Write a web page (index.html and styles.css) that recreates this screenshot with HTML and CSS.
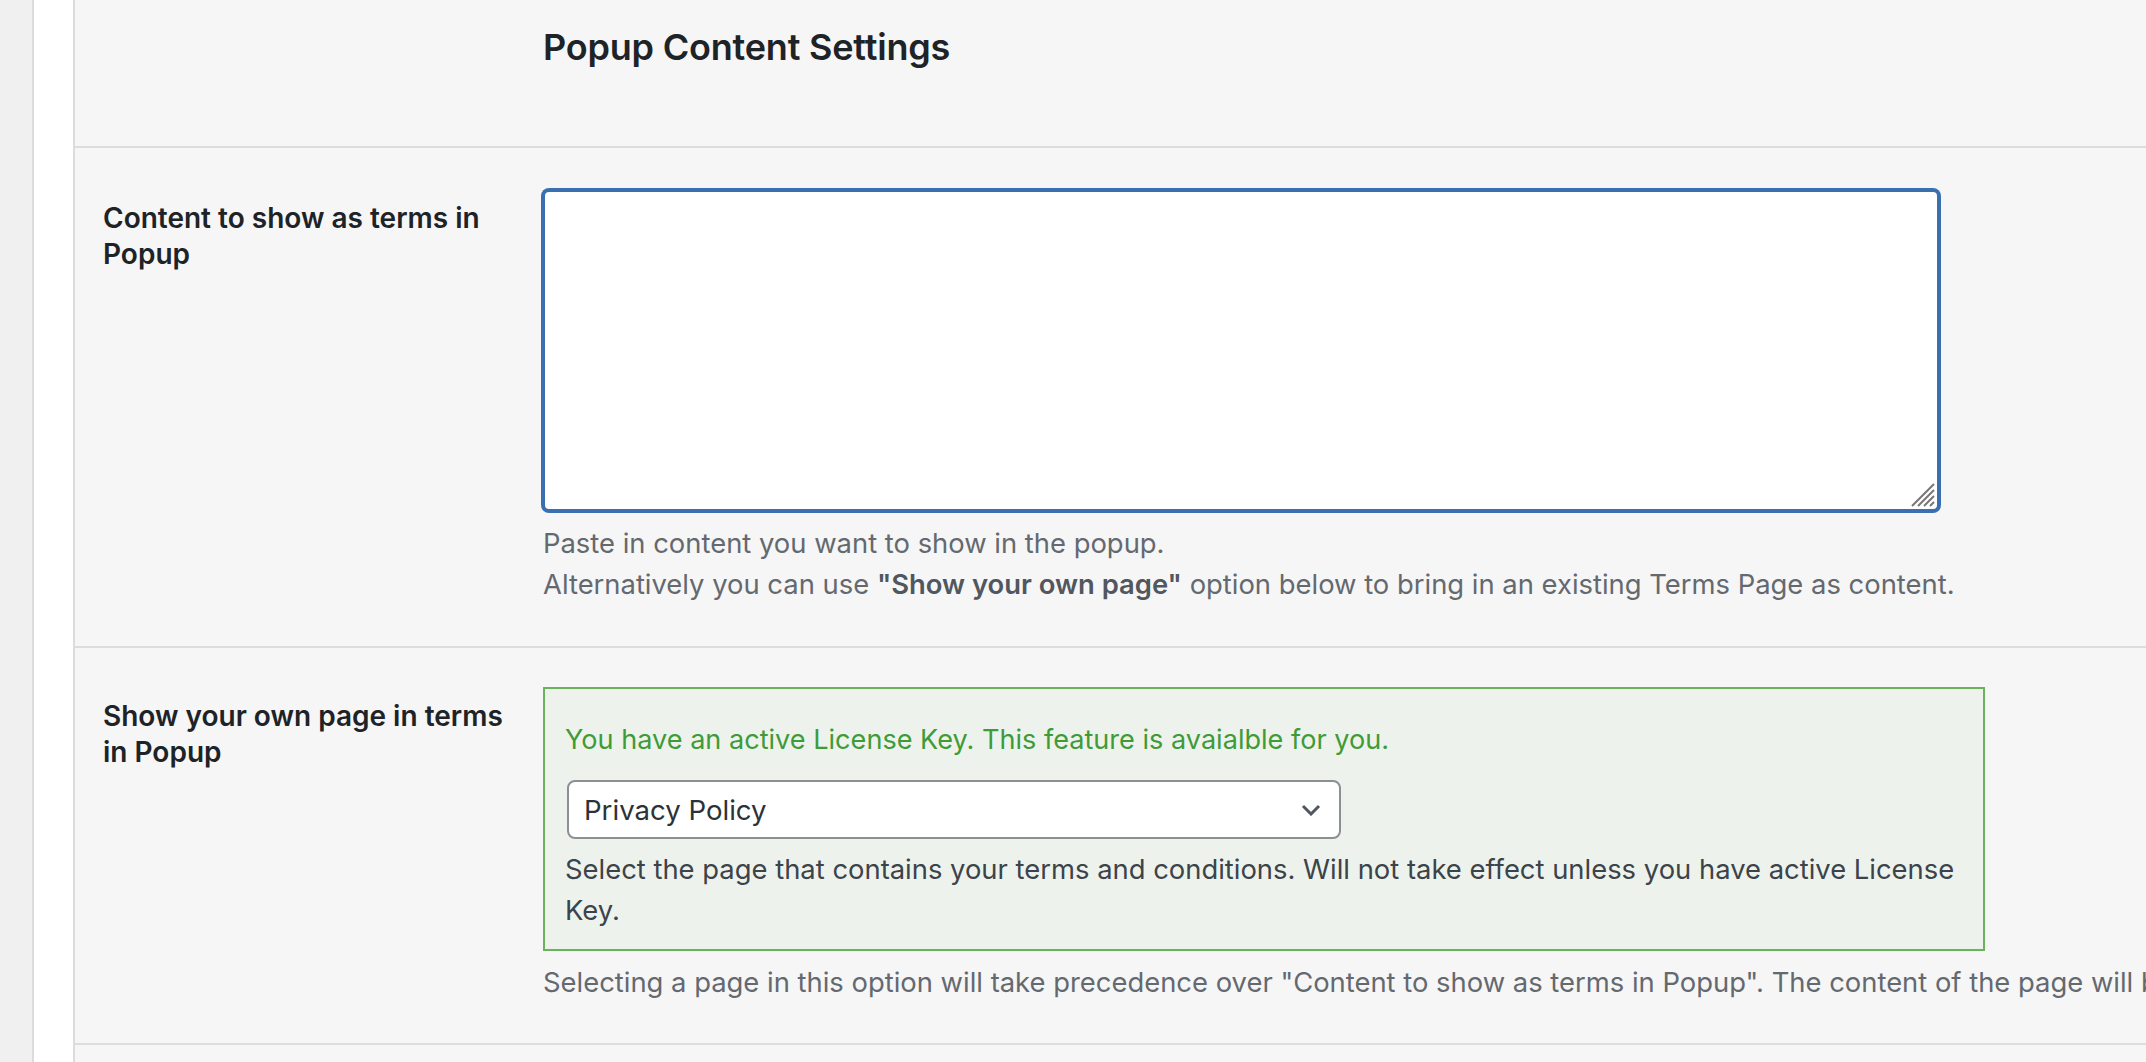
FILE: index.html
```html
<!DOCTYPE html>
<html lang="en">
<head>
<meta charset="utf-8">
<title>Popup Content Settings</title>
<link rel="stylesheet" href="styles.css">
</head>
<body>
<div class="shell">
  <div class="rail"></div>
  <div class="strip"></div>
  <main class="content">
    <section class="row row-head">
      <div class="th"></div>
      <div class="td"><h2 class="title">Popup Content Settings</h2></div>
    </section>
    <section class="row row-terms">
      <div class="th"><label class="label" for="terms">Content to show as terms in Popup</label></div>
      <div class="td">
        <div class="area-wrap">
          <textarea id="terms" class="area"></textarea>
          <svg class="grip" width="26" height="26" viewBox="0 0 26 26" aria-hidden="true">
            <path d="M2 24 L24 2 M8 24 L24 8 M14 24 L24 14 M20 24 L24 20" stroke="#777" stroke-width="2" fill="none"/>
          </svg>
        </div>
        <p class="desc">Paste in content you want to show in the popup.<br>Alternatively you can use <strong>"Show your own page"</strong> option below to bring in an existing Terms Page as content.</p>
      </div>
    </section>
    <section class="row row-page">
      <div class="th"><label class="label">Show your own page in terms in Popup</label></div>
      <div class="td">
        <div class="notice">
          <p class="notice-ok">You have an active License Key. This feature is avaialble for you.</p>
          <div class="select">
            <span class="select-value">Privacy Policy</span>
            <svg class="chev" width="20" height="12" viewBox="0 0 20 12" aria-hidden="true">
              <path d="M2 2 L10 10 L18 2" stroke="#50575e" stroke-width="3" fill="none"/>
            </svg>
          </div>
          <p class="notice-desc">Select the page that contains your terms and conditions. Will not take effect unless you have active License Key.</p>
        </div>
        <p class="desc nowrap">Selecting a page in this option will take precedence over "Content to show as terms in Popup". The content of the page will be used instead of the content entered above.</p>
      </div>
    </section>
    <section class="row row-tail"></section>
  </main>
</div>
</body>
</html>
```

FILE: styles.css
```css
html, body {
  margin: 0;
  padding: 0;
  height: 100%;
  overflow: hidden;
}
body {
  font-family: Inter, "Noto Sans", "Liberation Sans", sans-serif;
  background: #f6f6f6;
  color: #1d2327;
}
.shell {
  display: flex;
  height: 1062px;
}
.rail {
  width: 32px;
  flex: none;
  background: #f0f0f0;
  border-right: 2px solid #dcdcde;
}
.strip {
  width: 39px;
  flex: none;
  background: #ffffff;
  border-right: 2px solid #dcdcde;
}
.content {
  flex: 1;
  min-width: 0;
  background: #f6f6f6;
}
.row {
  display: flex;
  border-bottom: 2px solid #dddddd;
}
.th {
  width: 400px;
  flex: none;
  padding: 0 40px 0 28px;
}
.td {
  flex: 1;
  min-width: 0;
}
.row-head {
  height: 146px;
}
.row-head .td {
  padding-top: 25px;
}
.title {
  margin: 0;
  font-size: 36px;
  line-height: 44px;
  font-weight: 600;
  color: #1d2327;
  letter-spacing: -0.2px;
}
.label {
  display: block;
  font-size: 28px;
  line-height: 36px;
  font-weight: 600;
  color: #1d2327;
}
.row-terms .th {
  padding-top: 52px;
}
.row-terms .td {
  padding-top: 42px;
  padding-bottom: 41px;
}
.area-wrap {
  position: relative;
  width: 1396px;
  height: 321px;
}
.area {
  display: block;
  box-sizing: border-box;
  width: 1396px;
  height: 321px;
  margin: 0;
  border: 2px solid #3a70b0;
  box-shadow: 0 0 0 2px #3a70b0;
  border-radius: 6px;
  background: #ffffff;
  resize: none;
  outline: none;
}
.grip {
  position: absolute;
  right: 3px;
  bottom: 3px;
}
.desc {
  margin: 12px 0 0;
  font-size: 27.4px;
  line-height: 41px;
  color: #646970;
}
.desc strong {
  font-weight: 600;
  color: #50575e;
}
.nowrap {
  white-space: nowrap;
  margin-top: 11px;
}
.row-page .th {
  padding-top: 50px;
}
.row-page .td {
  padding-top: 39px;
  padding-bottom: 40px;
}
.notice {
  box-sizing: border-box;
  width: 1442px;
  border: 2px solid #68b35c;
  background: #edf3ec;
  padding: 30px 6px 18px 20px;
}
.notice-ok {
  margin: 0;
  font-size: 27.1px;
  line-height: 41px;
  color: #3f9b38;
}
.select {
  box-sizing: border-box;
  width: 774px;
  height: 59px;
  margin: 20px 0 0 2px;
  border: 2px solid #8c8f94;
  border-radius: 8px;
  background: #ffffff;
  display: flex;
  align-items: center;
  justify-content: space-between;
  padding: 0 18px 0 15px;
}
.select-value {
  font-size: 27.6px;
  color: #2c3338;
}
.notice-desc {
  margin: 10px 0 0;
  font-size: 27.4px;
  line-height: 41px;
  color: #3c434a;
}
.row-tail {
  border-bottom: none;
  height: 20px;
}
```
